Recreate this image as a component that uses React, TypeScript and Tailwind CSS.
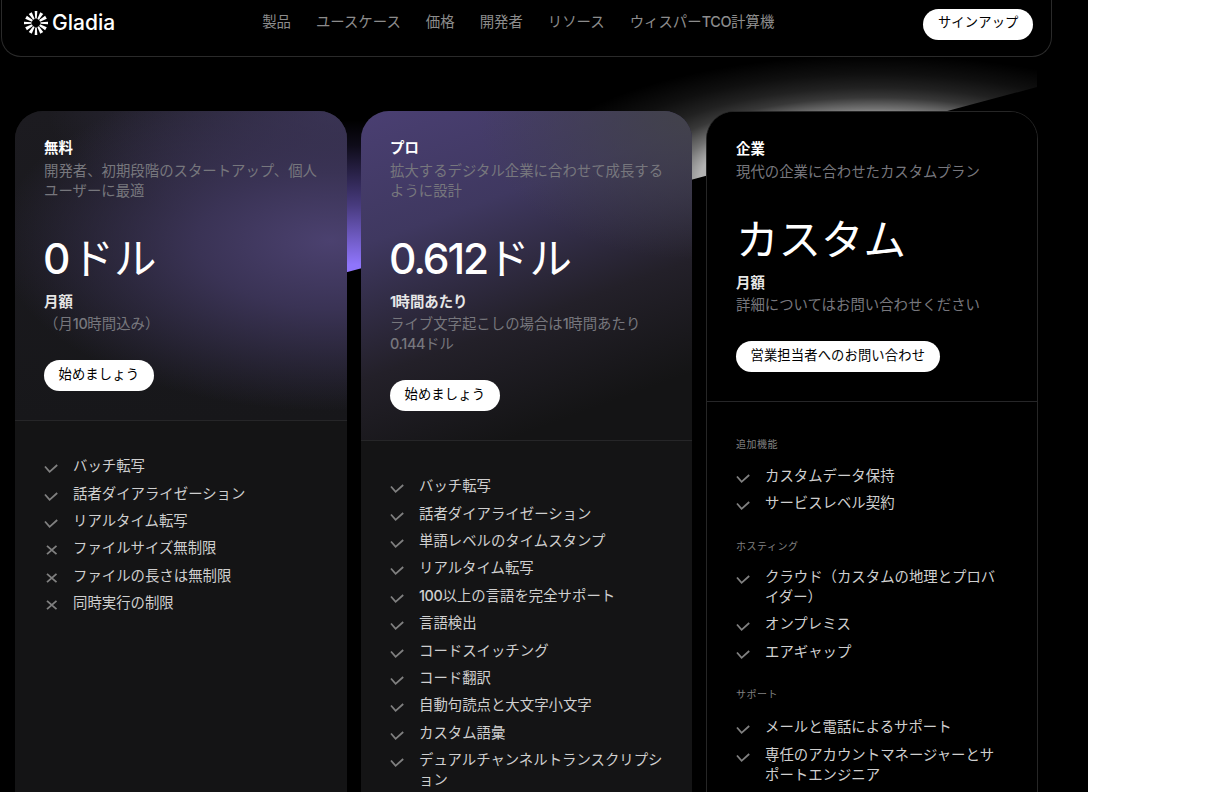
const FONT = "font-['Inter','Noto_Sans_CJK_JP',sans-serif]";

function Logo() {
  const rays = [0, 30, 60, 90, 120, 150, 180, 210, 240, 270, 300, 330];
  return (
    <svg width="24" height="24" viewBox="-12 -12 24 24" className="shrink-0">
      {rays.map((deg) => (
        <path
          key={deg}
          d={deg % 90 === 0 ? "M-0.8 -4.5L0.8 -4.5L1.3 -12L-1.3 -12Z" : "M-0.9 -4.2L0.9 -4.2L1.7 -11.5L-1.7 -11.5Z"}
          fill="#fff"
          transform={`rotate(${deg})`}
        />
      ))}
    </svg>
  );
}

function CheckIcon() {
  return (
    <svg width="14" height="10" viewBox="0 0 14 10" fill="none" stroke="#808080" strokeWidth="1.8" className="shrink-0 mt-[8px]">
      <path d="M1 2.5L5.6 7.8L13.2 1" />
    </svg>
  );
}

function CrossIcon() {
  return (
    <svg width="14" height="10" viewBox="0 0 14 10" fill="none" stroke="#808080" strokeWidth="1.8" className="shrink-0 mt-[7px]">
      <path d="M3 0.8L12.5 9.2M12.5 0.8L3 9.2" />
    </svg>
  );
}

// latin runs sit a little heavier than the japanese around them
function Heavy({ text }: { text: string }) {
  return (
    <>
      {text.split(/([A-Z0-9.]+)/).map((part, i) =>
        i % 2 ? (
          <span key={i} className="font-medium tracking-tight">
            {part}
          </span>
        ) : (
          part
        )
      )}
    </>
  );
}

function Feature({ label, off }: { label: string; off?: boolean }) {
  return (
    <li className="flex gap-[15px] text-[14.4px] leading-5 text-[#cfcfcf]">
      {off ? <CrossIcon /> : <CheckIcon />}
      <span>
        <Heavy text={label} />
      </span>
    </li>
  );
}

function FeatureList({ items }: { items: string[] }) {
  return (
    <ul className="flex flex-col gap-[7.4px]">
      {items.map((item) => (
        <Feature key={item} label={item} />
      ))}
    </ul>
  );
}

function Background() {
  return (
    <svg width="1088" height="300" className="absolute left-0 top-0">
      <defs>
        <radialGradient id="violet" gradientUnits="userSpaceOnUse" cx="0" cy="0" r="1" gradientTransform="translate(354 290) scale(200 170)">
          <stop offset="0.15" stopColor="#8f75fb" />
          <stop offset="0.5" stopColor="#8f75fb" stopOpacity="0.5" />
          <stop offset="0.85" stopColor="#8f75fb" stopOpacity="0.1" />
          <stop offset="1" stopColor="#8f75fb" stopOpacity="0" />
        </radialGradient>
        <radialGradient id="grey" gradientUnits="userSpaceOnUse" cx="0" cy="0" r="1" gradientTransform="translate(875 180) scale(350 125)">
          <stop offset="0.5" stopColor="#fff" stopOpacity="0.7" />
          <stop offset="0.57" stopColor="#fff" stopOpacity="0.45" />
          <stop offset="0.66" stopColor="#fff" stopOpacity="0.22" />
          <stop offset="0.74" stopColor="#fff" stopOpacity="0.13" />
          <stop offset="0.85" stopColor="#fff" stopOpacity="0.06" />
          <stop offset="1" stopColor="#fff" stopOpacity="0" />
        </radialGradient>
      </defs>
      <polygon points="340,274 500,231 500,56 340,56" fill="url(#violet)" />
      <polygon points="340,274 1037,87 1037,56 340,56" fill="url(#grey)" />
    </svg>
  );
}

function CardHead({
  title,
  desc,
  price,
  period,
  note,
  cta,
  className,
}: {
  title: string;
  desc: string;
  price: React.ReactNode;
  period: React.ReactNode;
  note: React.ReactNode;
  cta: string;
  className: string;
}) {
  return (
    <div className={`pl-[29px] pr-[28px] pt-[27px] pb-[29px] border-b border-[#262628] ${className}`}>
      <h3 className="mb-[3px] text-[14.4px] leading-5 font-bold text-white">{title}</h3>
      <p className="text-[14.4px] leading-5 text-[#77777d]">{desc}</p>
      <div className="mt-[28px] flex h-[60px] items-center whitespace-nowrap text-[42.5px] leading-none text-white">{price}</div>
      <p className="mb-[2px] mt-[3px] text-[14.4px] font-bold leading-5 text-[#e6e6e6]">{period}</p>
      <p className="text-[14.4px] leading-5 text-[#77777d]">{note}</p>
      <div className="mt-[26px]">
        <button className="h-[31px] rounded-full bg-white px-[14.5px] pb-[2px] text-[13.3px] leading-none tracking-[0.01em] text-black">
          {cta}
        </button>
      </div>
    </div>
  );
}

const FREE = [
  { label: "バッチ転写" },
  { label: "話者ダイアライゼーション" },
  { label: "リアルタイム転写" },
  { label: "ファイルサイズ無制限", off: true },
  { label: "ファイルの長さは無制限", off: true },
  { label: "同時実行の制限", off: true },
];

const PRO = [
  "バッチ転写",
  "話者ダイアライゼーション",
  "単語レベルのタイムスタンプ",
  "リアルタイム転写",
  "100以上の言語を完全サポート",
  "言語検出",
  "コードスイッチング",
  "コード翻訳",
  "自動句読点と大文字小文字",
  "カスタム語彙",
  "デュアルチャンネルトランスクリプション",
];

const NAV = ["製品", "ユースケース", "価格", "開発者", "リソース", "ウィスパーTCO計算機"];

export default function App() {
  return (
    <div className={`${FONT} relative h-[792px] w-[1222px] overflow-hidden bg-white`}>
      <div className="relative h-full w-[1088px] overflow-hidden bg-black">
        <Background />

        {/* Nav */}
        <header className="relative ml-px flex h-[57px] w-[1051px] items-start rounded-b-[20px] border-x border-b border-[#2a2a2a] pl-[22px] pr-[18px] pt-[9px]">
          <div className="flex items-center gap-[4px]">
            <Logo />
            <span className="text-[21px] font-medium leading-7 text-white">Gladia</span>
          </div>
          <nav className="ml-[147px] flex gap-[25px] pt-[3px] text-[14.4px] leading-5 text-[#8c8c8c]">
            {NAV.map((item) => (
              <a key={item}>
                <Heavy text={item} />
              </a>
            ))}
          </nav>
          <button className="ml-auto h-[31px] rounded-full bg-white px-[14.5px] pb-[3px] text-[13.3px] leading-none tracking-[0.01em] text-black">
            サインアップ
          </button>
        </header>

        {/* Plans */}
        <div className="relative ml-[15px] mt-[54px] flex w-[1023px] items-start gap-[14px]">
          <section className="h-[720px] w-[332px] overflow-hidden rounded-[28px] bg-[#141415]">
            <CardHead
              title="無料"
              desc="開発者、初期段階のスタートアップ、個人ユーザーに最適"
              price={<span className="-ml-px"><span className="mr-[2px] font-medium tracking-tight">0</span>ドル</span>}
              period="月額"
              note={<Heavy text="（月10時間込み）" />}
              cta="始めましょう"
              className="bg-[radial-gradient(ellipse_100%_55%_at_95%_42%,#4b416f_0%,#3a3355_40%,transparent_100%),radial-gradient(ellipse_90%_40%_at_100%_0%,#3a3454_0%,transparent_100%),linear-gradient(180deg,#1c1b20_0%,#17171a_100%)]"
            />
            <ul className="flex flex-col gap-[7.4px] pl-[29px] pr-[28px] pt-[35.3px]">
              {FREE.map((f) => (
                <Feature key={f.label} label={f.label} off={f.off} />
              ))}
            </ul>
          </section>

          <section className="h-[720px] w-[331px] overflow-hidden rounded-[28px] bg-[#141415]">
            <CardHead
              title="プロ"
              desc="拡大するデジタル企業に合わせて成長するように設計"
              price={<span className="-ml-px"><span className="font-medium tracking-[-0.05em]">0.612</span>ドル</span>}
              period={<><span className="tracking-tighter">1</span>時間あたり</>}
              note={<Heavy text="ライブ文字起こしの場合は1時間あたり0.144ドル" />}
              cta="始めましょう"
              className="bg-[radial-gradient(ellipse_65%_45%_at_100%_0%,#42424a_0%,transparent_100%),linear-gradient(160deg,#4a3f72_0%,#3f3860_30%,#232029_60%,#141415_85%)]"
            />
            <div className="pl-[29px] pr-[28px] pt-[35.3px]">
              <FeatureList items={PRO} />
            </div>
          </section>

          <section className="h-[720px] w-[332px] overflow-hidden rounded-[28px] border border-[#262626] bg-black">
            <CardHead
              title="企業"
              desc="現代の企業に合わせたカスタムプラン"
              price="カスタム"
              period="月額"
              note="詳細についてはお問い合わせください"
              cta="営業担当者へのお問い合わせ"
              className="bg-black"
            />
            <div className="pl-[29px] pr-[30px] pt-[35px]">
              <h4 className="mb-[15px] text-[10px] leading-[14px] tracking-[0.05em] text-[#808080]">追加機能</h4>
              <FeatureList items={["カスタムデータ保持", "サービスレベル契約"]} />
              <h4 className="mb-[14px] mt-[25.5px] text-[10px] leading-[14px] tracking-[0.05em] text-[#808080]">ホスティング</h4>
              <FeatureList items={["クラウド（カスタムの地理とプロバイダー）", "オンプレミス", "エアギャップ"]} />
              <h4 className="mb-[16px] mt-[25.5px] text-[10px] leading-[14px] tracking-[0.05em] text-[#808080]">サポート</h4>
              <FeatureList items={["メールと電話によるサポート", "専任のアカウントマネージャーとサポートエンジニア"]} />
            </div>
          </section>
        </div>
      </div>
    </div>
  );
}
